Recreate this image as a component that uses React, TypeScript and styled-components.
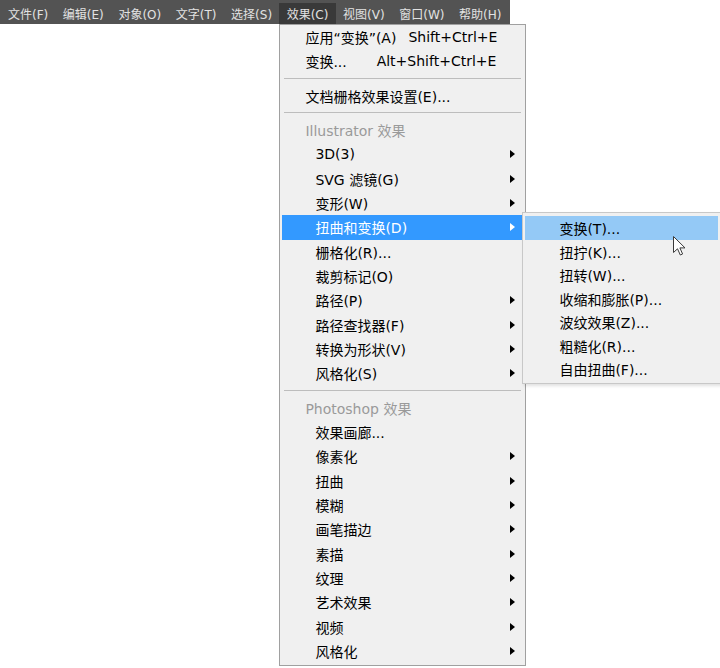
import React from "react";
import styled, { createGlobalStyle } from "styled-components";

const GlobalStyle = createGlobalStyle`
	html, body {
		margin: 0;
		padding: 0;
		background: #ffffff;
	}
	body {
		font-family: "DejaVu Sans", "Noto Sans CJK SC", sans-serif;
	}
`;

const Page = styled.div`
	position: relative;
	width: 720px;
	height: 668px;
	overflow: hidden;
	background: #ffffff;
`;

const MenuBar = styled.div`
	display: inline-flex;
	align-items: stretch;
	height: 24px;
	width: 510px;
	padding: 3px 0 0 0.7px;
	box-sizing: border-box;
	background: #535353;
`;

const BarItem = styled.div<{ $active?: boolean }>`
	position: relative;
	display: flex;
	align-items: center;
	padding: 0 7.3px;
	font-size: 12px;
	color: #e2e2e2;
	background: ${({ $active }) => ($active ? "#393939" : "transparent")};
	white-space: nowrap;
`;

const Dropdown = styled.div`
	position: absolute;
	top: 21px;
	left: 0;
	width: 247px;
	box-sizing: border-box;
	padding: 0 2px 2px;
	background: #f0f0f0;
	border: 1px solid #a0a0a0;
	z-index: 2;
`;

const Row = styled.div<{ $indent?: boolean; $selected?: boolean; $disabled?: boolean }>`
	position: relative;
	display: flex;
	align-items: center;
	height: 24.33px;
	padding-left: ${({ $indent }) => ($indent ? "33px" : "23px")};
	padding-right: 27px;
	font-size: 14px;
	color: ${({ $selected, $disabled }) =>
		$selected ? "#ffffff" : $disabled ? "#9a9a9a" : "#000000"};
	background: ${({ $selected }) => ($selected ? "#3399ff" : "transparent")};
	white-space: nowrap;
`;

const Label = styled.span`
	flex: 1;
`;

const Shortcut = styled.span`
	margin-left: 12px;
`;

const Arrow = styled.span<{ $light?: boolean }>`
	position: absolute;
	right: 8px;
	top: 50%;
	margin-top: -4px;
	width: 0;
	height: 0;
	border-top: 4px solid transparent;
	border-bottom: 4px solid transparent;
	border-left: 5px solid ${({ $light }) => ($light ? "#ffffff" : "#000000")};
`;

const Separator = styled.div`
	height: 10px;
	display: flex;
	align-items: center;
	padding: 0 2px;

	&::after {
		content: "";
		flex: 1;
		height: 1px;
		background: #bdbdbd;
	}
`;

const SubMenu = styled.div`
	position: absolute;
	top: -3px;
	left: 240px;
	width: 199px;
	box-sizing: border-box;
	padding: 3px 2px 2px;
	background: #f0f0f0;
	border: 1px solid #c8c8c8;
	box-shadow: 2px 2px 3px rgba(0, 0, 0, 0.12);
	z-index: 3;
`;

const SubRow = styled.div<{ $hover?: boolean }>`
	display: flex;
	align-items: center;
	height: 23.5px;
	padding-left: 34px;
	font-size: 14px;
	color: #000000;
	background: ${({ $hover }) => ($hover ? "#94c9f6" : "transparent")};
	white-space: nowrap;
`;

const Cursor = styled.svg`
	position: absolute;
	left: 673px;
	top: 236px;
	z-index: 5;
`;

const barItems = ["文件(F)", "编辑(E)", "对象(O)", "文字(T)", "选择(S)", "效果(C)", "视图(V)", "窗口(W)", "帮助(H)"];

type Item = { label: string; sub?: boolean; selected?: boolean };

const illustratorItems: Item[] = [
	{ label: "3D(3)", sub: true },
	{ label: "SVG 滤镜(G)", sub: true },
	{ label: "变形(W)", sub: true },
	{ label: "扭曲和变换(D)", sub: true, selected: true },
	{ label: "栅格化(R)..." },
	{ label: "裁剪标记(O)" },
	{ label: "路径(P)", sub: true },
	{ label: "路径查找器(F)", sub: true },
	{ label: "转换为形状(V)", sub: true },
	{ label: "风格化(S)", sub: true },
];

const photoshopItems: Item[] = [
	{ label: "效果画廊..." },
	{ label: "像素化", sub: true },
	{ label: "扭曲", sub: true },
	{ label: "模糊", sub: true },
	{ label: "画笔描边", sub: true },
	{ label: "素描", sub: true },
	{ label: "纹理", sub: true },
	{ label: "艺术效果", sub: true },
	{ label: "视频", sub: true },
	{ label: "风格化", sub: true },
];

const distortItems = ["变换(T)...", "扭拧(K)...", "扭转(W)...", "收缩和膨胀(P)...", "波纹效果(Z)...", "粗糙化(R)...", "自由扭曲(F)..."];

const ItemRow: React.FC<{ item: Item }> = ({ item }) => (
	<Row $indent $selected={item.selected}>
		<Label>{item.label}</Label>
		{item.sub && <Arrow $light={item.selected} />}
		{item.selected && (
			<SubMenu>
				{distortItems.map((d, i) => (
					<SubRow key={d} $hover={i === 0}>
						{d}
					</SubRow>
				))}
			</SubMenu>
		)}
	</Row>
);

const App: React.FC = () => {
	return (
		<Page>
			<GlobalStyle />
			<MenuBar>
				{barItems.map((name) => (
					<BarItem key={name} $active={name === "效果(C)"}>
						{name}
						{name === "效果(C)" && (
							<Dropdown>
								<Row>
									<Label>应用“变换”(A)</Label>
									<Shortcut>Shift+Ctrl+E</Shortcut>
								</Row>
								<Row>
									<Label>变换...</Label>
									<Shortcut>Alt+Shift+Ctrl+E</Shortcut>
								</Row>
								<Separator />
								<Row>
									<Label>文档栅格效果设置(E)...</Label>
								</Row>
								<Separator />
								<Row $disabled>
									<Label>Illustrator 效果</Label>
								</Row>
								{illustratorItems.map((item) => (
									<ItemRow key={item.label} item={item} />
								))}
								<Separator />
								<Row $disabled>
									<Label>Photoshop 效果</Label>
								</Row>
								{photoshopItems.map((item) => (
									<ItemRow key={item.label} item={item} />
								))}
							</Dropdown>
						)}
					</BarItem>
				))}
			</MenuBar>
			<Cursor width="13" height="20" viewBox="0 0 13 20">
				<path
					d="M0.5 0.5 L0.5 16.5 L4.5 12.8 L7.3 19 L9.6 18 L6.9 11.9 L12 11.9 Z"
					fill="#ffffff"
					stroke="#3a3a3a"
					strokeWidth="1"
					strokeLinejoin="round"
				/>
			</Cursor>
		</Page>
	);
};

export default App;
